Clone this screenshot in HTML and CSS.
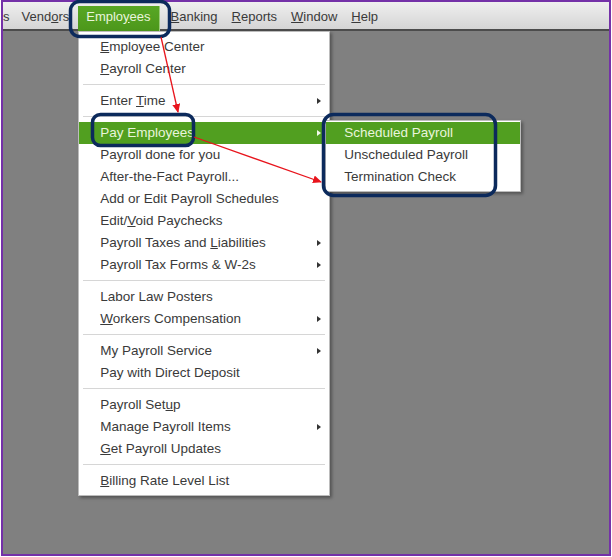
FILE: index.html
```html
<!DOCTYPE html>
<html lang="en">
<head>
<meta charset="UTF-8">
<meta name="viewport" content="width=device-width, initial-scale=1.0">
<title>Employees menu</title>
<link rel="stylesheet" href="styles.css">
</head>
<body>
<div class="screen">
  <div class="menubar">
    <div class="menu-title cut">s</div>
    <div class="menu-title">Vend<u>o</u>rs</div>
    <div class="menu-title open">Emplo<u>y</u>ees
      <!-- Employees drop-down -->
      <div class="dropdown">
        <div class="item"><u>E</u>mployee Center</div>
        <div class="item"><u>P</u>ayroll Center</div>
        <div class="sep"></div>
        <div class="item sub">Enter <u>T</u>ime</div>
        <div class="sep"></div>
        <div class="item sub active">Pay Employees
          <div class="submenu">
            <div class="item active">Scheduled Payroll</div>
            <div class="item">Unscheduled Payroll</div>
            <div class="item">Termination Check</div>
          </div>
        </div>
        <div class="item">Payroll done for you</div>
        <div class="item">After-the-Fact Payroll...</div>
        <div class="item">Add or Edit Payroll Schedules</div>
        <div class="item">Edit/<u>V</u>oid Paychecks</div>
        <div class="item sub">Payroll Taxes and <u>L</u>iabilities</div>
        <div class="item sub">Payroll Tax Forms &amp; W-2s</div>
        <div class="sep"></div>
        <div class="item">Labor Law Posters</div>
        <div class="item sub"><u>W</u>orkers Compensation</div>
        <div class="sep"></div>
        <div class="item sub">My Payroll Service</div>
        <div class="item">Pay with Direct Deposit</div>
        <div class="sep"></div>
        <div class="item">Payroll Set<u>u</u>p</div>
        <div class="item sub">Manage Payroll Items</div>
        <div class="item"><u>G</u>et Payroll Updates</div>
        <div class="sep"></div>
        <div class="item"><u>B</u>illing Rate Level List</div>
      </div>
    </div>
    <div class="menu-title after-open"><u>B</u>anking</div>
    <div class="menu-title"><u>R</u>eports</div>
    <div class="menu-title"><u>W</u>indow</div>
    <div class="menu-title"><u>H</u>elp</div>
  </div>
  <div class="workspace"></div>
</div>

<!-- call-outs drawn on top of the menus -->
<svg class="notes" width="612" height="557" viewBox="0 0 612 557">
  <defs>
    <marker id="head" markerWidth="9" markerHeight="8" refX="8" refY="4" orient="auto" markerUnits="userSpaceOnUse">
      <path d="M0,0 L9,4 L0,8 Z" fill="#e8141c"/>
    </marker>
  </defs>
  <rect x="70.5" y="1.5" width="99" height="35" rx="9" class="box"/>
  <rect x="92.5" y="114.5" width="101" height="31" rx="8" class="box"/>
  <rect x="323.5" y="114.5" width="172" height="81" rx="10" class="box"/>
  <line x1="161" y1="37" x2="178" y2="112" class="arrow" marker-end="url(#head)"/>
  <line x1="194" y1="137" x2="321" y2="182" class="arrow" marker-end="url(#head)"/>
</svg>
</body>
</html>
```

FILE: styles.css
```css
/* Window frame */
body {
  margin: 0;
  background-color: #fff;
  font-family: "Liberation Sans", Arial, sans-serif;
  font-size: 13px;
  color: #3a3a3a;
}
.screen {
  width: 606px;
  height: 552px;
  margin-left: 1px;
  border: 2px solid #7431a8;
  display: flex;
  flex-direction: column;
  overflow: hidden;
}

/* Menu bar */
.menubar {
  height: 29px;
  flex-shrink: 0;
  display: flex;
  align-items: flex-end;
  background: linear-gradient(#efefef, #d3d3d3);
  box-shadow: inset 0 -2px 0 #4c4c4c;
}
.menu-title {
  height: 25px;
  line-height: 22px;
  padding: 0 7px;
  white-space: nowrap;
  position: relative;
}
.menu-title.cut {
  padding: 0 5px 0 0;
}
.menu-title.open {
  padding: 0 8px 0 8px;
  margin-left: 2px;
  background: linear-gradient(#58a724, #4c971b);
  border-right: 1px solid #9ccc7c;
  color: #e9f5dc;
  z-index: 2;
}
.menu-title.after-open {
  padding-left: 11px;
}
u {
  text-underline-offset: 1px;
}

.workspace {
  flex: 1;
  background-color: #808080;
}

/* Drop-down menus */
.dropdown,
.submenu {
  position: absolute;
  background-color: #fff;
  border: 1px solid #bcbcbc;
  box-shadow: 2px 2px 3px rgba(0, 0, 0, 0.35);
  color: #3a3a3a;
  font-size: 13.5px;
}
.dropdown {
  left: 0;
  top: 100%;
  width: 250px;
  padding: 4px 0 3px;
}
.submenu {
  left: calc(100% - 4px);
  top: -2px;
  width: 194px;
  padding: 1px 0 3px;
}
.item {
  position: relative;
  height: 22px;
  line-height: 22px;
  padding-left: 21px;
}
.submenu .item {
  padding-left: 18px;
}
.item.active {
  background-color: #519f20;
  color: #e9f5dc;
}
/* little arrow for items that open a submenu */
.item.sub::after {
  content: "";
  position: absolute;
  right: 8px;
  top: 8px;
  border-left: 4px solid #333;
  border-top: 3.5px solid transparent;
  border-bottom: 3.5px solid transparent;
}
.item.sub.active::after {
  border-left-color: #f2f8ea;
}
.sep {
  height: 1px;
  margin: 4px 4px 5px;
  background-color: #d6d6d6;
}

/* Call-outs */
.notes {
  position: absolute;
  left: 0;
  top: 0;
  z-index: 10;
  pointer-events: none;
}
.box {
  fill: none;
  stroke: #0c2a5c;
  stroke-width: 3.5;
}
.arrow {
  stroke: #e8141c;
  stroke-width: 1.3;
}
```
